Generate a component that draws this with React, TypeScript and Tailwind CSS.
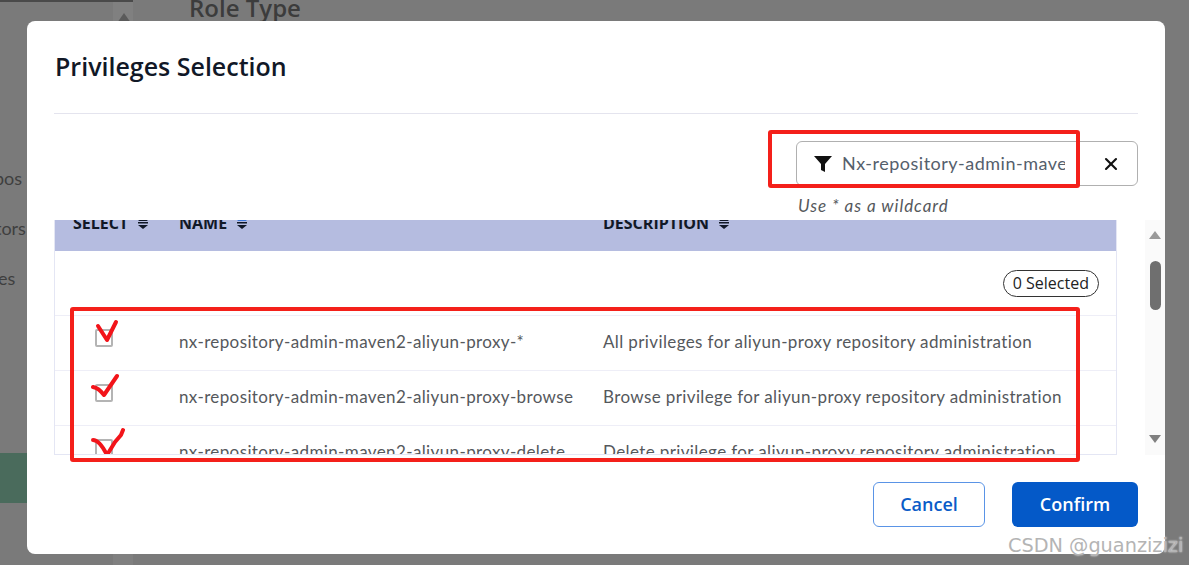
import React from 'react'
import { X } from 'lucide-react'

const rows = [
  { name: 'nx-repository-admin-maven2-aliyun-proxy-*', description: 'All privileges for aliyun-proxy repository administration' },
  { name: 'nx-repository-admin-maven2-aliyun-proxy-browse', description: 'Browse privilege for aliyun-proxy repository administration' },
  { name: 'nx-repository-admin-maven2-aliyun-proxy-delete', description: 'Delete privilege for aliyun-proxy repository administration' }
]

// hand drawn red ticks from the screenshot annotation
const ticks = [
  'M7 9 L16 23 L25 5',
  'M2 15 C7 16 10 19 13 23 L26 4',
  'M2 13 C7 13 12 20 16 28 L24 15 L30 8 L32 3'
]

function SortIcon({ active }: { active?: boolean }) {
  return (
    <svg width="12" height="14" viewBox="0 0 12 14" className="ml-[9px] shrink-0">
      <path d="M1 5 L6 1 L11 5 Z" fill={active ? '#3b74d8' : '#111827'} />
      <rect x="1" y="6" width="10" height="1.5" fill="#111827" />
      <path d="M1 9 L11 9 L6 13 Z" fill="#111827" />
    </svg>
  )
}

function Header({ label, active }: { label: string; active?: boolean }) {
  return (
    <div className="flex items-center text-[16px] font-bold uppercase text-[#111827] font-['Open_Sans',sans-serif]">
      {label}
      <SortIcon active={active} />
    </div>
  )
}

function Row({ name, description, tick }: { name: string; description: string; tick: string }) {
  return (
    <div className="grid h-[55px] grid-cols-[106px_424px_1fr] items-center border-t border-[#eeeef7] pl-[18px] text-[17px] tracking-[0.38px] text-[#55585c]">
      <div className="relative -mt-[10px] ml-[22px] h-[18px] w-[18px] rounded-[2px] border-2 border-[#b4b4b4] bg-white">
        <svg width="34" height="32" viewBox="0 0 34 32" fill="none" className="absolute -top-[14px] -left-[6px]">
          <path d={tick} stroke="#f2141a" strokeWidth="4" strokeLinecap="round" strokeLinejoin="round" />
        </svg>
      </div>
      <div className="-mt-[2px] whitespace-nowrap">{name}</div>
      <div className="-mt-[2px] whitespace-nowrap">{description}</div>
    </div>
  )
}

export default function App() {
  return (
    <div className="relative h-[565px] w-[1189px] overflow-hidden bg-[#7a7a7a] font-['Lato',sans-serif]">
      {/* page behind the dialog */}
      <div className="flex h-full">
        <div className="w-[113px] border-t-2 border-[#4a4a4a]" />
        <div className="w-[20px] border-t-2 border-[#4a4a4a] bg-[#808080]" />
        <div className="w-[56px]" />
        <div className="-mt-[10px] text-[24px] font-semibold text-[#3c3c3c] font-['Open_Sans',sans-serif]">Role Type</div>
      </div>
      <div className="absolute top-[153px] left-0 w-[27px] overflow-hidden text-[18px] leading-[50px] text-[#3f3f3f]">
        <div className="-ml-[6px]">pos</div>
        <div className="-ml-[5px]">tors</div>
        <div className="-ml-[2px]">es</div>
      </div>
      <div className="absolute top-[453px] left-0 h-[50px] w-[27px] bg-[#4a6b5c]" />
      <svg width="14" height="10" viewBox="0 0 14 10" className="absolute top-[13px] left-[117px]">
        <path d="M0 10 L7 0 L14 10 Z" fill="#5a5a5a" />
      </svg>

      {/* dialog */}
      <div className="absolute top-[21px] left-[27px] flex h-[533px] w-[1138px] flex-col rounded-[8px] bg-white">
        <div className="mx-[27px] flex h-[93px] items-center border-b border-[#e4e4ee] pb-[1px] pl-[1px] text-[25px] leading-none font-semibold text-[#111827] font-['Open_Sans',sans-serif]">
          Privileges Selection
        </div>

        <div className="mt-[27px] mr-[27px] ml-auto flex h-[45px] w-[342px] items-center rounded-[6px] border border-[#b0b0b0] pl-[17px]">
          <svg width="18" height="18" viewBox="0 0 18 18" className="shrink-0">
            <path d="M0 1 H18 L11 9 V17 L7 15 V9 Z" fill="#111" />
          </svg>
          <div className="ml-[10px] w-[223px] overflow-hidden text-[18px] tracking-[0.5px] whitespace-nowrap text-[#55606c]">Nx-repository-admin-maven2-aliyun-proxy</div>
          <X className="mr-[16px] ml-auto text-[#111]" size={20} strokeWidth={2.5} />
        </div>
        <div className="mt-[10px] ml-[771px] text-[17px] leading-[20px] tracking-[0.95px] text-[#55585c] italic">Use * as a wildcard</div>

        <div className="relative mt-[4px] flex h-[235px]">
          <div className="ml-[27px] h-full w-[1063px] overflow-hidden border-r border-b border-l border-[#e4e6f4]">
            <div className="grid h-[31px] grid-cols-[106px_424px_1fr] items-start overflow-hidden bg-[#b5bce0] pl-[18px]">
              <div className="-mt-[9px]"><Header label="Select" /></div>
              <div className="-mt-[9px]"><Header label="Name" active /></div>
              <div className="-mt-[9px]"><Header label="Description" /></div>
            </div>
            <div className="flex h-[64px] items-center justify-end pr-[17px]">
              <div className="flex h-[27px] items-center rounded-full border border-[#333] px-[9px] text-[16px] text-[#222] font-['Open_Sans',sans-serif]">
                0 Selected
              </div>
            </div>
            {rows.map((row, i) => (
              <Row key={row.name} name={row.name} description={row.description} tick={ticks[i]} />
            ))}
          </div>

          {/* scrollbar */}
          <div className="ml-[28px] flex h-full w-[20px] flex-col items-center bg-[#fafafa] pt-[11px]">
            <svg width="12" height="8" viewBox="0 0 12 8"><path d="M0 8 L6 0 L12 8 Z" fill="#9a9a9a" /></svg>
            <div className="mt-[22px] h-[49px] w-[11px] rounded-full bg-[#6f6f6f]" />
            <svg width="12" height="8" viewBox="0 0 12 8" className="mt-auto mb-[12px]"><path d="M0 0 L12 0 L6 8 Z" fill="#808080" /></svg>
          </div>
        </div>

        <div className="mt-[27px] mr-[27px] flex justify-end gap-[27px] text-[18px] font-semibold font-['Open_Sans',sans-serif]">
          <button className="h-[45px] w-[112px] rounded-[6px] border border-[#5a94e6] bg-white text-[#0a5cc8]">Cancel</button>
          <button className="h-[45px] w-[126px] rounded-[6px] bg-[#0459c8] text-white">Confirm</button>
        </div>
      </div>

      {/* red annotation boxes */}
      <div className="absolute top-[130px] left-[768px] h-[58px] w-[312px] rounded-[3px] border-[4px] border-[#f4201a]" />
      <div className="absolute top-[307px] left-[70px] h-[155px] w-[1010px] rounded-[3px] border-[4px] border-[#f4201a]" />

      {/* watermark */}
      <div className="absolute top-[533px] left-[1008px] text-[19.3px] leading-[26px] whitespace-nowrap text-[#b4b4b4] font-['DejaVu_Sans',sans-serif] [text-shadow:0_0_2px_#fff]">
        CSDN @guanzizizi
      </div>
    </div>
  )
}
